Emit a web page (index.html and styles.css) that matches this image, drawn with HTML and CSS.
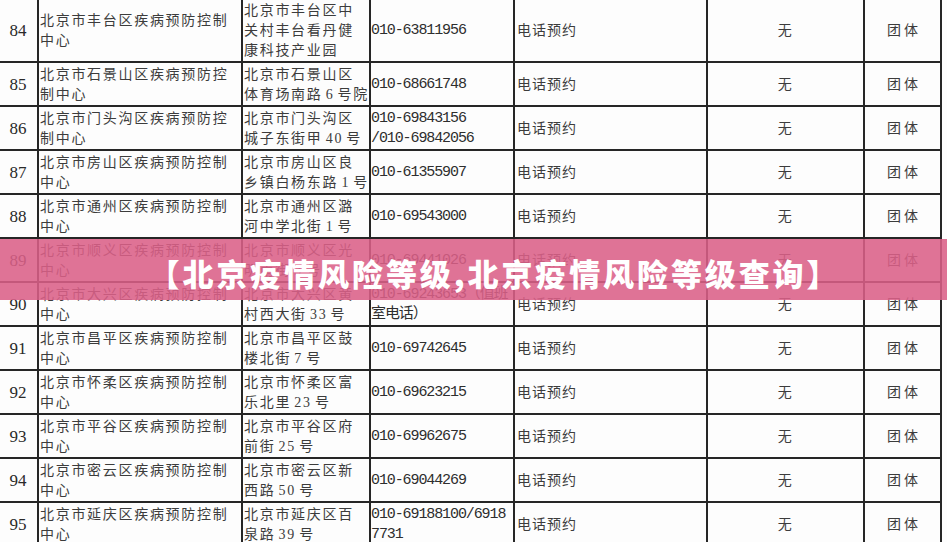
FILE: index.html
```html
<!DOCTYPE html>
<html lang="zh-CN">
<head>
<meta charset="utf-8">
<title>北京疫情风险等级</title>
<link rel="stylesheet" href="styles.css">
</head>
<body>
<div class="page">
  <table class="sheet">
    <colgroup>
      <col class="c-no"><col class="c-name"><col class="c-addr"><col class="c-tel"><col class="c-way"><col class="c-fee"><col class="c-type">
    </colgroup>
    <tbody>
      <tr class="tall">
        <td class="no">84</td><td class="txt">北京市丰台区疾病预防控制<br>中心</td><td class="txt addr">北京市丰台区中<br>关村丰台看丹健<br>康科技产业园</td><td class="tel">010-63811956</td><td class="way">电话预约</td><td class="mid">无</td><td class="mid kind">团体</td>
      </tr>
      <tr>
        <td class="no">85</td><td class="txt">北京市石景山区疾病预防控<br>制中心</td><td class="txt addr">北京市石景山区<br>体育场南路 6 号院</td><td class="tel">010-68661748</td><td class="way">电话预约</td><td class="mid">无</td><td class="mid kind">团体</td>
      </tr>
      <tr>
        <td class="no">86</td><td class="txt">北京市门头沟区疾病预防控<br>制中心</td><td class="txt addr">北京市门头沟区<br>城子东街甲 40 号</td><td class="tel">010-69843156<br>/010-69842056</td><td class="way">电话预约</td><td class="mid">无</td><td class="mid kind">团体</td>
      </tr>
      <tr>
        <td class="no">87</td><td class="txt">北京市房山区疾病预防控制<br>中心</td><td class="txt addr">北京市房山区良<br>乡镇白杨东路 1 号</td><td class="tel">010-61355907</td><td class="way">电话预约</td><td class="mid">无</td><td class="mid kind">团体</td>
      </tr>
      <tr>
        <td class="no">88</td><td class="txt">北京市通州区疾病预防控制<br>中心</td><td class="txt addr">北京市通州区潞<br>河中学北街 1 号</td><td class="tel">010-69543000</td><td class="way">电话预约</td><td class="mid">无</td><td class="mid kind">团体</td>
      </tr>
      <tr>
        <td class="no">89</td><td class="txt">北京市顺义区疾病预防控制<br>中心</td><td class="txt addr">北京市顺义区光<br>明南街 3 号</td><td class="tel">010-69441026</td><td class="way">电话预约</td><td class="mid">无</td><td class="mid kind">团体</td>
      </tr>
      <tr>
        <td class="no">90</td><td class="txt">北京市大兴区疾病预防控制<br>中心</td><td class="txt addr">北京市大兴区黄<br>村西大街 33 号</td><td class="tel">010-69243653（值班<br>室电话）</td><td class="way">电话预约</td><td class="mid">无</td><td class="mid kind">团体</td>
      </tr>
      <tr>
        <td class="no">91</td><td class="txt">北京市昌平区疾病预防控制<br>中心</td><td class="txt addr">北京市昌平区鼓<br>楼北街 7 号</td><td class="tel">010-69742645</td><td class="way">电话预约</td><td class="mid">无</td><td class="mid kind">团体</td>
      </tr>
      <tr>
        <td class="no">92</td><td class="txt">北京市怀柔区疾病预防控制<br>中心</td><td class="txt addr">北京市怀柔区富<br>乐北里 23 号</td><td class="tel">010-69623215</td><td class="way">电话预约</td><td class="mid">无</td><td class="mid kind">团体</td>
      </tr>
      <tr>
        <td class="no">93</td><td class="txt">北京市平谷区疾病预防控制<br>中心</td><td class="txt addr">北京市平谷区府<br>前街 25 号</td><td class="tel">010-69962675</td><td class="way">电话预约</td><td class="mid">无</td><td class="mid kind">团体</td>
      </tr>
      <tr>
        <td class="no">94</td><td class="txt">北京市密云区疾病预防控制<br>中心</td><td class="txt addr">北京市密云区新<br>西路 50 号</td><td class="tel">010-69044269</td><td class="way">电话预约</td><td class="mid">无</td><td class="mid kind">团体</td>
      </tr>
      <tr>
        <td class="no">95</td><td class="txt">北京市延庆区疾病预防控制<br>中心</td><td class="txt addr">北京市延庆区百<br>泉路 39 号</td><td class="tel">010-69188100/6918<br>7731</td><td class="way">电话预约</td><td class="mid">无</td><td class="mid kind">团体</td>
      </tr>
    </tbody>
  </table>
  <div class="banner"><span class="banner-text">【北京疫情风险等级,北京疫情风险等级查询】</span></div>
</div>
</body>
</html>
```

FILE: styles.css
```css
html, body {
  margin: 0;
  padding: 0;
  background: #fdfdfd;
}
.page {
  position: relative;
  width: 947px;
  height: 542px;
  overflow: hidden;
}
.sheet {
  border-collapse: collapse;
  table-layout: fixed;
  width: 943px;
  margin: -4px 0 0 -3px;
  color: #3c3c3c;
}
.c-no { width: 40px; }
.c-name { width: 204px; }
.c-addr { width: 128px; }
.c-tel { width: 144px; }
.c-way { width: 193px; }
.c-fee { width: 157px; }
.c-type { width: 77px; }

.sheet tr { height: 44px; }
.sheet tr.tall { height: 65px; }

.sheet td {
  border: 2px solid #262626;
  padding: 2px 0 0 1px;
  vertical-align: middle;
  white-space: nowrap;
  overflow: hidden;
  font-family: "Liberation Serif", "Noto Sans CJK SC", serif;
  font-size: 14px;
  line-height: 20px;
  letter-spacing: 1.7px;
}
.sheet td.addr {
  word-spacing: -2px;
}
.sheet td.no {
  text-align: center;
  padding-left: 0;
  font-size: 17px;
  letter-spacing: 0;
  color: #2a2a2a;
}
.sheet td.tel {
  font-family: "Liberation Mono", "Noto Sans CJK SC", monospace;
  font-size: 15px;
  letter-spacing: -1.1px;
  padding-left: 0;
  color: #2e2e2e;
}
.sheet td.way {
  padding-left: 2px;
  letter-spacing: 1px;
}
.sheet td.mid {
  text-align: center;
  padding-left: 0;
}
.sheet td.kind {
  letter-spacing: 3px;
  padding-left: 3px;
}

.banner {
  position: absolute;
  left: 0;
  right: 0;
  top: 239px;
  height: 61px;
  background: rgba(219, 96, 135, 0.88);
  display: flex;
  align-items: center;
  justify-content: center;
}
.banner-text {
  color: #ffffff;
  font-family: "Noto Sans CJK SC", "Noto Sans", sans-serif;
  font-weight: 900;
  font-size: 31px;
  letter-spacing: 2.9px;
  line-height: 1;
  padding-top: 6px;
  margin-left: 42px;
}
```
